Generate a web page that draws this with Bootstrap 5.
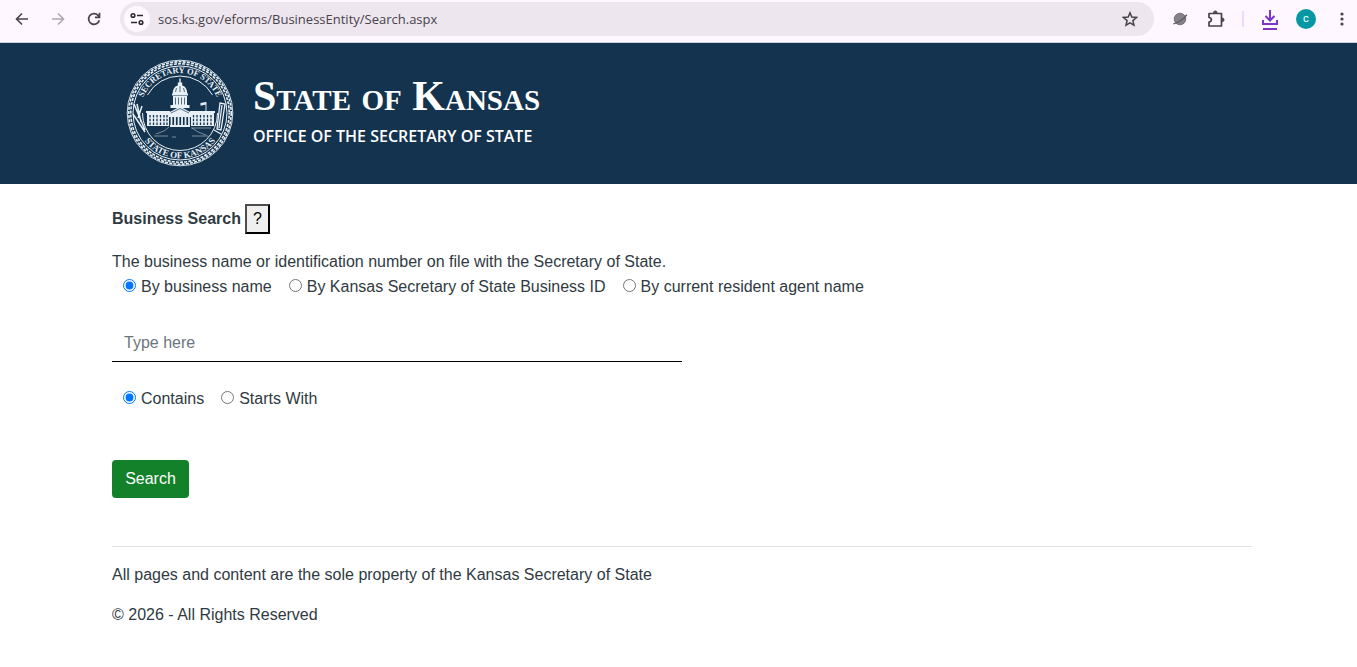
<!DOCTYPE html>
<html lang="en">
<head>
<meta charset="utf-8">
<meta name="viewport" content="width=device-width, initial-scale=1">
<title>Business Search</title>
<link href="https://cdn.jsdelivr.net/npm/bootstrap@5.3.0/dist/css/bootstrap.min.css" rel="stylesheet">
<style>
body { font-family: "Liberation Sans", Arial, sans-serif; font-size: 16px; line-height: 24px; color: #303a42; background: #fff; }
.browser-bar { height: 43px; padding: 0 5px 4px 12px; background: #fef7ff; border-bottom: 1px solid #c9d3df; color: #47434a; }
.tool { display: flex; flex: none; align-items: center; justify-content: center; width: 20px; height: 20px; padding: 0; border: 0; background: none; color: inherit; }
.tool svg, .site-info svg { display: block; }
.tool-off { color: #aea8b1; }
.tool-download { color: #7d35c9; }
.address { height: 34px; border-radius: 17px; background: #ede6ef; padding: 0 14px 0 4px; min-width: 0; }
.site-info { display: flex; flex: none; align-items: center; justify-content: center; width: 26px; height: 26px; padding: 0; border: 0; border-radius: 50%; background: #fff9ff; color: #2b282e; }
.url { flex: 1; min-width: 0; height: 24px; border: 0; padding: 0; background: none; outline: 0; font-family: "Open Sans", sans-serif; font-size: 13px; color: #47434a; }
.divider { width: 2px; height: 16px; background: #eaddfb; }
.avatar { border-radius: 50%; background: #0597a3; color: #fff; font-family: Roboto, sans-serif; font-size: 11px; line-height: 20px; }
.wrap { max-width: 1155px; padding-left: 11px; padding-right: 4px; }
.masthead { height: 141px; padding-bottom: 2px; background: #14334f; color: #fff; }
.seal { width: 108px; height: 108px; margin-left: 14px; margin-right: 19px; flex: none; }
.titles { padding-bottom: 6px; }
.state-name { font-family: "Liberation Serif", "Times New Roman", serif; font-variant: small-caps; font-weight: 700; font-size: 42px; line-height: 48px; margin: 0; }
.office { font-family: "Open Sans", sans-serif; font-weight: 600; font-size: 16px; line-height: 24px; margin: 4px 0 0; }
.page-title { font-size: 16px; font-weight: 700; line-height: 24px; margin: 0; }
.title-row { padding-top: 20px; }
.help { width: 25px; height: 30px; padding: 0; border: 2px solid; border-color: #4c4c4c #000 #000 #4c4c4c; background: #efefef; color: #000; line-height: 24px; }
.choices { padding-left: 11px; gap: 17px; line-height: 26px; }
.choices label { height: 25px; }
.choices input { width: 13px; height: 13px; margin: 0 5px 2px 0; accent-color: #0075ff; }
.query { border: 0; border-bottom: 1px solid #000; border-radius: 0; height: 39px; padding: 7px 12px 5px; width: 50%; }
.query::placeholder { color: #6c757d; }
.btn-search { background: #128129; color: #fff; border: 0; border-radius: 4px; height: 38px; width: 77px; padding: 0; margin-top: 49px; }
.foot { border-top: 1px solid #e2e3e4; margin-top: 48px; padding-top: 16px; }
</style>
</head>
<body>
<nav class="browser-bar d-flex align-items-center gap-3" aria-label="Browser">
  <button class="tool" aria-label="Back"><svg width="16" height="16" viewBox="0 0 16 16" fill="none" stroke="currentColor" stroke-width="1.6"><path d="M14 8H3M8 2.5 2.5 8 8 13.5"/></svg></button>
  <button class="tool tool-off" aria-label="Forward"><svg width="16" height="16" viewBox="0 0 16 16" fill="none" stroke="currentColor" stroke-width="1.6"><path d="M2 8h11M8 2.5 13.5 8 8 13.5"/></svg></button>
  <button class="tool" aria-label="Reload"><svg width="16" height="16" viewBox="0 0 16 16" fill="none" stroke="currentColor" stroke-width="1.7"><path d="M13.300 9.200A5.400 5.400 0 1 1 12 4.300L13.500 6M13.500 1.800V6.300H9"/></svg></button>
  <div class="address d-flex align-items-center flex-fill">
    <button class="site-info me-2" aria-label="Site information"><svg width="14" height="14" viewBox="0 0 14 14" fill="none" stroke="currentColor" stroke-width="1.6"><circle cx="3" cy="3.5" r="1.8"/><path d="M7 3.500h6M1 10.500h6"/><circle cx="11" cy="10.5" r="1.8"/></svg></button>
    <input class="url" type="text" aria-label="Address" value="sos.ks.gov/eforms/BusinessEntity/Search.aspx">
    <button class="tool" aria-label="Bookmark"><svg width="16" height="16" viewBox="0 0 16 16" fill="none" stroke="currentColor" stroke-width="1.5"><path d="m8 1.800 1.800 4.300 4.700.4-3.600 3.100 1.100 4.600L8 11.800l-4 2.400 1.100-4.600-3.600-3.100 4.700-.4z"/></svg></button>
  </div>
  <button class="tool" aria-label="Planet extension"><svg width="16" height="16" viewBox="0 0 16 16"><circle cx="8" cy="8" r="5.8" fill="#858287" stroke="#66626a" stroke-width=".8"/><path d="M1.300 12.800C5 12.500 12.500 8 14.800 3.600" fill="none" stroke="#5e5a61" stroke-width="1.3"/></svg></button>
  <button class="tool" aria-label="Extensions"><svg width="18" height="18" viewBox="0 0 18 18" fill="none" stroke="currentColor" stroke-width="1.7" stroke-linejoin="round"><path d="M2 3.500h12.500v12.500H2v-4c3.200-.5 3.200-4 0-4.500Z"/><path d="M6.500 2.800a1.800 1.800 0 0 1 3.600 0ZM15.200 8a1.800 1.800 0 0 1 0 3.600Z" fill="currentColor" stroke-width="1"/></svg></button>
  <span class="divider"></span>
  <button class="tool tool-download" aria-label="Downloads"><svg width="18" height="22" viewBox="0 0 18 22" fill="none" stroke="currentColor" stroke-width="2"><path d="M9 2v10M4.500 8 9 12.500 13.500 8M2 12v4h14v-4M2 21h14"/></svg></button>
  <button class="tool avatar" aria-label="Profile">c</button>
  <button class="tool" aria-label="Menu"><svg width="4" height="16" viewBox="0 0 4 16" fill="currentColor"><circle cx="2" cy="3" r="1.6"/><circle cx="2" cy="8" r="1.6"/><circle cx="2" cy="13" r="1.6"/></svg></button>
</nav>

<header class="masthead d-flex align-items-center">
  <div class="container-fluid wrap d-flex align-items-center">
    <svg class="seal" viewBox="0 0 108 108" fill="none" stroke="#e8f0f6" role="img" aria-label="Seal of the Kansas Secretary of State">
      <defs>
        <path id="arc-top" d="M14 54a40 40 0 0 1 80 0"/>
        <path id="arc-bottom" d="M8.800 54a45.200 45.200 0 0 0 90.400 0"/>
      </defs>
      <circle cx="54" cy="54" r="52.8" stroke-width=".9"/>
      <circle cx="54" cy="54" r="51.2" stroke-width="1.6" stroke-dasharray="3 1.2"/>
      <circle cx="54" cy="54" r="49.2" stroke-width="1.6" stroke-dasharray="3 1.2" stroke-dashoffset="1.5"/>
      <circle cx="54" cy="54" r="47" stroke-width="1"/>
      <path d="M21.500 36A37.300 37.300 0 0 1 86.500 36M91.500 54A37.500 37.500 0 0 1 16.500 54" stroke-width="1"/>
      <g fill="#e8f0f6" stroke="none" font-family="Liberation Serif, serif" font-weight="700" text-anchor="middle">
        <text font-size="8.5"><textPath href="#arc-top" startOffset="50%">SECRETARY OF STATE</textPath></text>
        <text font-size="9"><textPath href="#arc-bottom" startOffset="50%">STATE OF KANSAS</textPath></text>
      </g>
      <path d="M8 45 19 71M11 45l4 18M7 55l12 18M16 47l-4 12" stroke-width="1.5"/>
      <path d="m94 44 5 1-4 26-4-1zM96 46l-3 23M88 71l7 4" stroke-width="1.3"/>
      <g fill="#e8f0f6" stroke="none">
        <path d="M53.300 19.500h1.400v4h1.500v3c3.500 1 5 4 5 8H46.800c0-4 1.500-7 5-8v-3h1.500zM46 34.500h16v2h-16zM47 37h14v9H47zM44.500 46h19v3h-19zM54 47.500l12 6.500H42zM20 52h24v2H20zM64 52h25v2H64zM21 54h22v13H21zM65 54h23v13H65zM43 54h22v4H43zM44 66h20v2H44z"/>
      </g>
      <path d="M45.500 58v9M49 58v9M52.500 58v9M56 58v9M59.500 58v9M63 58v9" stroke-width="1.8"/>
      <path d="M49.500 38.500v7M52.500 38.500v7M55.500 38.500v7M58.500 38.500v7M50.500 29l-1 4M54 27v6M57.500 29l1 4M45 54l9-4.500 9 4.500" stroke="#14334f" stroke-width=".7"/>
      <path d="M24 56v10M27.500 56v10M31 56v10M34.500 56v10M38 56v10M41 56v10M67.500 56v10M71 56v10M74.500 56v10M78 56v10M81.500 56v10M85 56v10" stroke="#14334f" stroke-width="1.3" stroke-dasharray="2.5 1.3"/>
      <path d="M80 43v9" stroke-width=".9"/><path d="M74.500 44l5.500-1v2.500l-5.500 1.300z" fill="#e8f0f6" stroke="none"/>
      <path d="M43 68l-5 4-8 3M65 69h20M66 69l6 4 8 3M28 77h14M46 78h4M66 77h16" stroke-width=".8" opacity=".6"/>
    </svg>
    <div class="titles">
      <h1 class="state-name">State of Kansas</h1>
      <p class="office">OFFICE OF THE SECRETARY OF STATE</p>
    </div>
  </div>
</header>

<main class="container-fluid wrap">
  <form onsubmit="return false">
    <div class="title-row d-flex align-items-center gap-1">
      <h2 class="page-title">Business Search</h2>
      <button type="button" class="help" aria-label="Help">?</button>
    </div>
    <p class="mb-0 mt-3">The business name or identification number on file with the Secretary of State.</p>
    <div class="choices d-flex flex-wrap">
      <label class="d-flex align-items-center"><input type="radio" name="field" checked>By business name</label>
      <label class="d-flex align-items-center"><input type="radio" name="field">By Kansas Secretary of State Business ID</label>
      <label class="d-flex align-items-center"><input type="radio" name="field">By current resident agent name</label>
    </div>
    <input class="form-control query mt-4" type="text" placeholder="Type here" aria-label="Search text">
    <div class="choices d-flex flex-wrap mt-4">
      <label class="d-flex align-items-center"><input type="radio" name="match" checked>Contains</label>
      <label class="d-flex align-items-center"><input type="radio" name="match">Starts With</label>
    </div>
    <button class="btn btn-search" type="submit">Search</button>
  </form>
  <footer class="foot">
    <p class="mb-3">All pages and content are the sole property of the Kansas Secretary of State</p>
    <p class="mb-0">© 2026 - All Rights Reserved</p>
  </footer>
</main>
<script src="https://cdn.jsdelivr.net/npm/bootstrap@5.3.0/dist/js/bootstrap.bundle.min.js"></script>
</body>
</html>
